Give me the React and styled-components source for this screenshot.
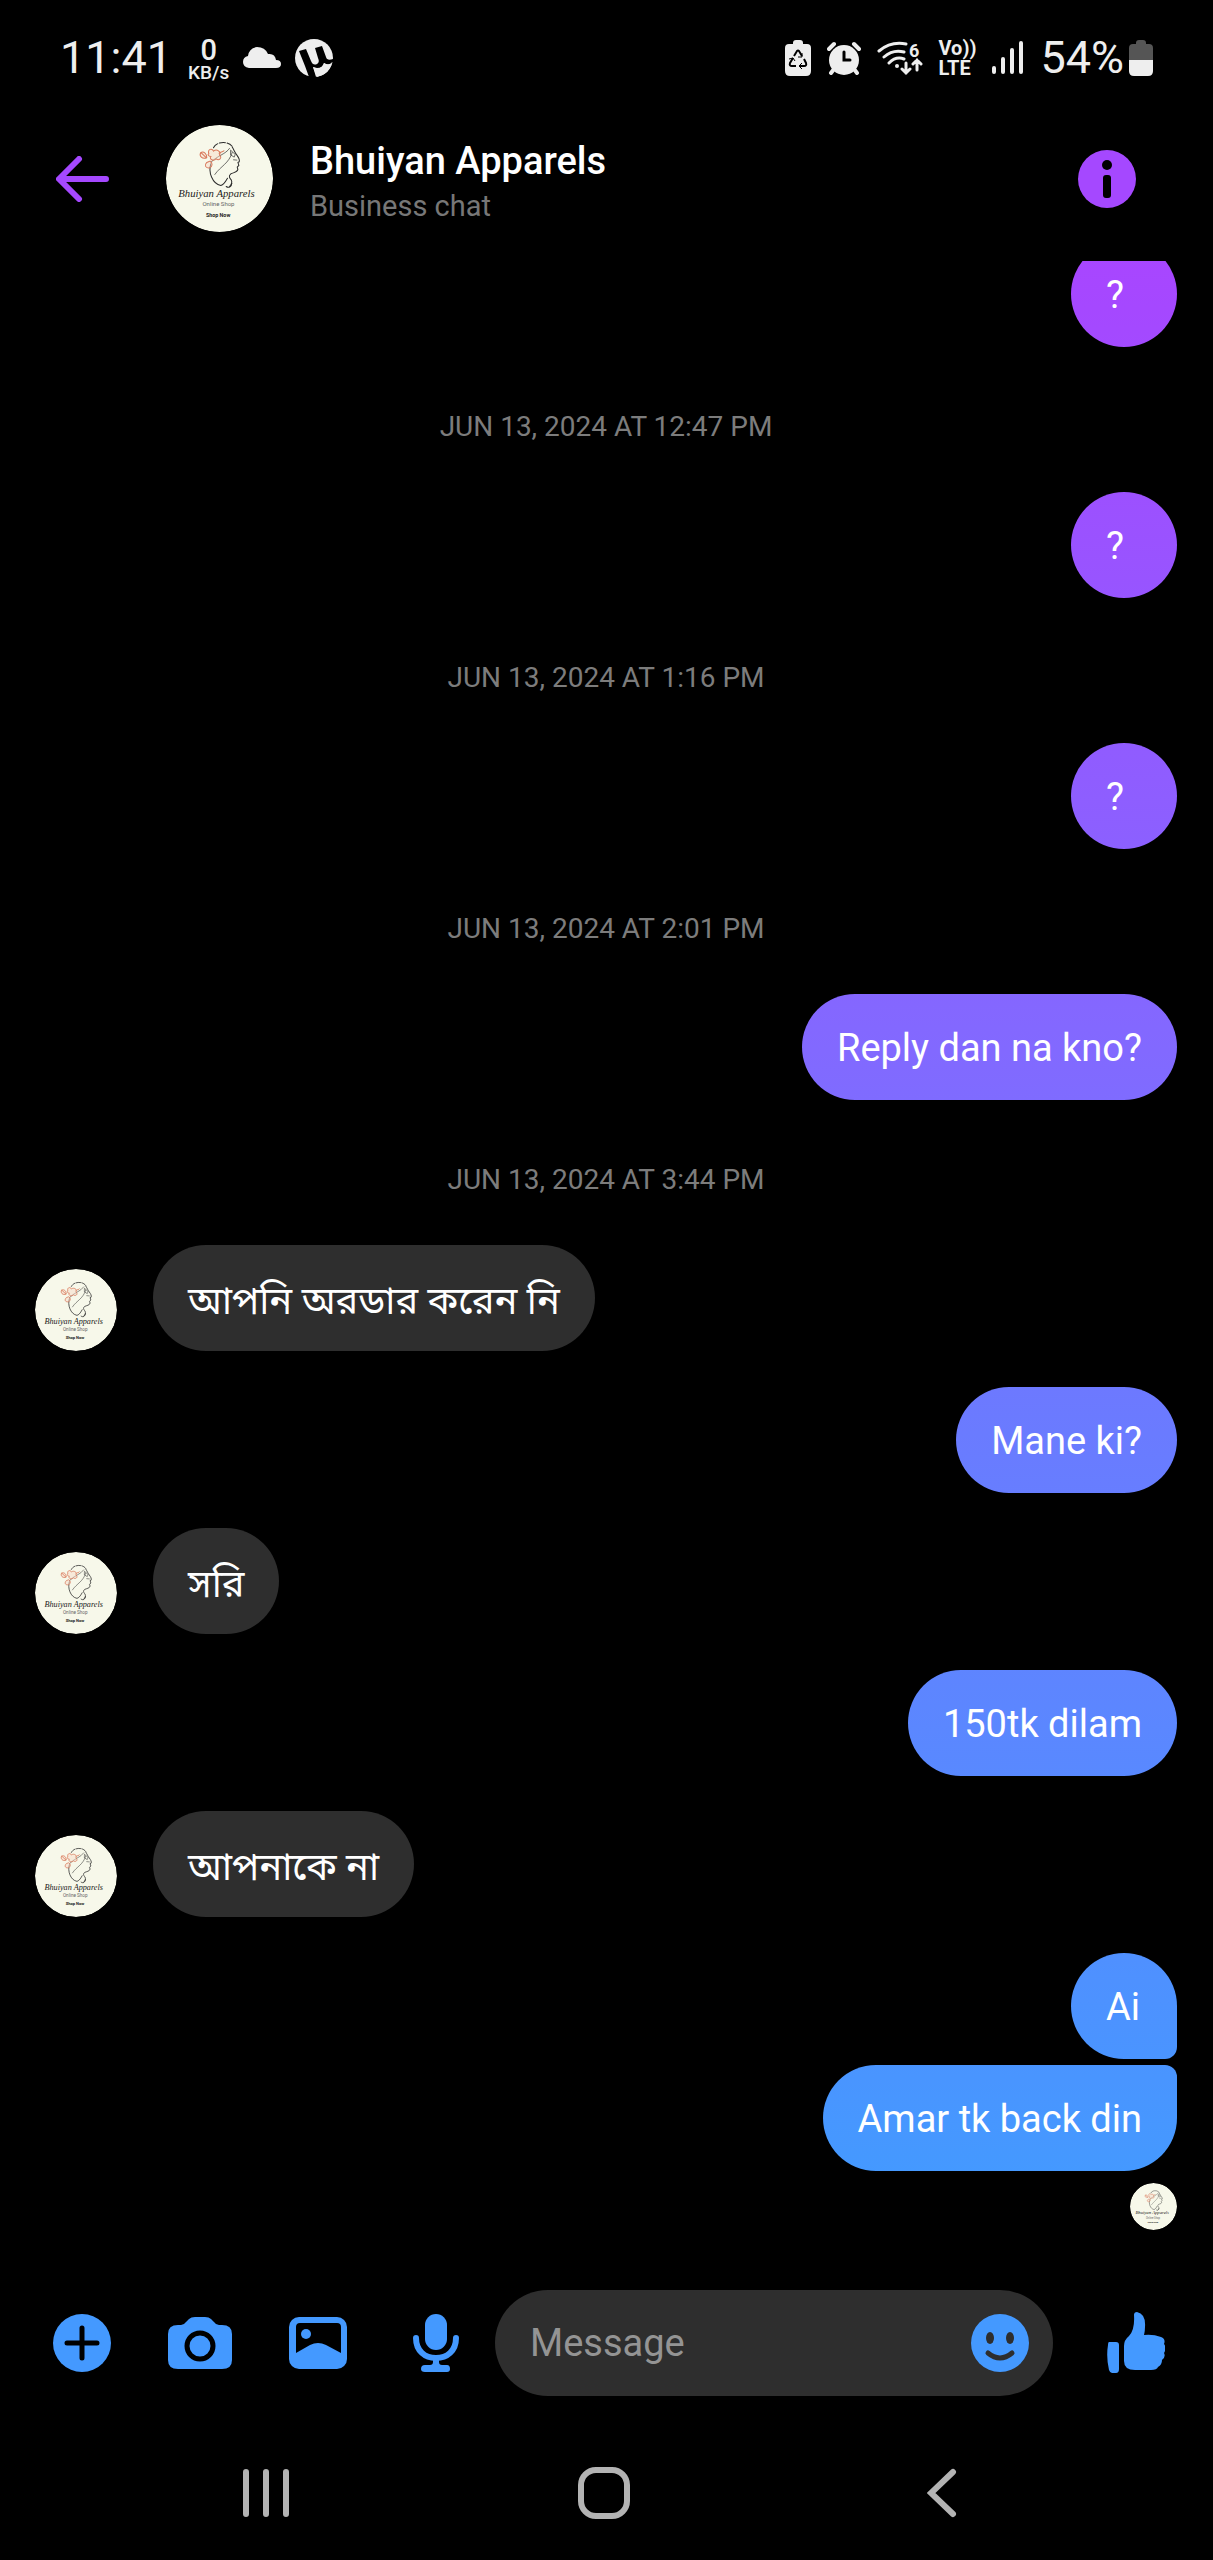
import React from "react";
import styled, { createGlobalStyle } from "styled-components";

const messages = [
  { id: 1, text: "?", mine: true },
  { id: 2, date: "JUN 13, 2024 AT 12:47 PM" },
  { id: 3, text: "?", mine: true },
  { id: 4, date: "JUN 13, 2024 AT 1:16 PM" },
  { id: 5, text: "?", mine: true },
  { id: 6, date: "JUN 13, 2024 AT 2:01 PM" },
  { id: 7, text: "Reply dan na kno?", mine: true },
  { id: 8, date: "JUN 13, 2024 AT 3:44 PM" },
  { id: 9, text: "আপনি অরডার করেন নি" },
  { id: 10, text: "Mane ki?", mine: true, space: "36px" },
  { id: 11, text: "সরি", space: "35px" },
  { id: 12, text: "150tk dilam", mine: true, space: "36px" },
  { id: 13, text: "আপনাকে না", space: "35px" },
  { id: 14, text: "Ai", mine: true, space: "36px", group: "first" },
  { id: 15, text: "Amar tk back din", mine: true, space: "6px", group: "last" }
];

const ShopLogo = () => (
  <svg viewBox="0 0 320 320" width="100%" height="100%" role="img" aria-label="Bhuiyan Apparels logo">
    <circle cx="160" cy="160" r="160" fill="#f7f8ea" />
    <g fill="none" stroke="#2b2b2b" strokeWidth="3" strokeLinecap="round" strokeLinejoin="round">
      <path d="M142 68C150 50 184 46 198 64" strokeDasharray="18 5" />
      <path d="M198 66C204 76 207 84 212 90C218 98 221 104 219 110L215 112L218 121L213 126L215 133C213 142 202 142 194 146C186 152 190 158 195 164C199 172 196 178 190 184" />
      <path d="M134 116C126 140 138 176 164 181C174 178 180 166 184 159" />
      <path d="M134 112C152 92 178 88 190 70M146 148C164 122 188 116 198 82" strokeWidth="2" />
      <path d="M194 76L207 88L204 96L194 90ZM202 104L212 105" strokeWidth="2" />
      <path d="M180 184C188 190 196 184 197 174" />
    </g>
    <g fill="#f7d9c8" fillOpacity="0.5" stroke="#d9795c" strokeWidth="3">
      <path d="M104 82C98 92 108 104 122 98C122 86 114 78 104 82ZM104 82L121 98" />
      <path d="M128 86C124 72 138 68 142 78C152 70 166 80 160 90C170 98 158 108 150 101C142 110 128 102 134 94C126 94 124 88 128 86Z" />
      <path d="M122 112C114 120 118 130 130 128C140 124 140 114 132 108Z" />
      <path d="M158 86C164 78 172 82 174 76" />
    </g>
    <LogoScript x="151" y="214" textAnchor="middle">Bhuiyan Apparels</LogoScript>
    <LogoCaption x="157" y="243" textAnchor="middle">Online Shop</LogoCaption>
    <LogoCaption x="156" y="275" textAnchor="middle" $bold>Shop Now</LogoCaption>
  </svg>
);

const StatusIcons = () => (
  <>
    <svg width="26" height="36" viewBox="0 0 26 36" fill="#eee">
      <path d="M8 3Q8 0 11 0H15Q18 0 18 3V4H22Q26 4 26 8V31Q26 36 21 36H5Q0 36 0 31V8Q0 4 4 4H8Z" />
      <g fill="none" stroke="#000" strokeWidth="2">
        <path d="M9 16L12 11Q13 10 14 11L17 16M19 19L21 23Q22 26 19 26H15M11 26H7Q4 26 5 23L8 18" />
        <path d="M17 13V17H13M17 23L14 26L17 29M4 19L8 18L10 21" strokeWidth="1" />
      </g>
    </svg>
    <svg width="34" height="34" viewBox="0 0 34 34" fill="none" strokeLinecap="round">
      <circle cx="17" cy="19" r="15" fill="#eee" />
      <path d="M2 8L7 3M32 8L27 3" stroke="#eee" strokeWidth="4" />
      <path d="M7 28L4 32M27 28L30 32" stroke="#eee" strokeWidth="4" />
      <path d="M17 11V19H23" stroke="#000" strokeWidth="3" />
    </svg>
    <svg width="46" height="36" viewBox="0 0 46 36" fill="none" stroke="#eee" strokeWidth="3" strokeLinecap="round">
      <path d="M2 11Q14 1 29 4M7 17Q16 9 27 12M12 23Q19 16 27 19" />
      <circle cx="20" cy="26" r="2" fill="#eee" stroke="none" />
      <path d="M29 23V33M25 29L29 33L33 29M40 30V20M36 24L40 20L44 24" />
      <SvgDigit x="32" y="17" stroke="none">6</SvgDigit>
    </svg>
  </>
);

const IconSignal = () => (
  <svg width="32" height="36" viewBox="0 0 32 36" stroke="#eee" strokeWidth="4" strokeLinecap="round">
    <path d="M2 28V32M11 19V32M20 10V32M29 3V32" />
  </svg>
);

const IconBattery = () => (
  <svg width="24" height="36" viewBox="0 0 24 36">
    <path d="M7 3Q7 0 10 0H14Q17 0 17 3V4H20Q24 4 24 8V20H0V8Q0 4 4 4H7Z" fill="#555" />
    <path d="M0 20H24V31Q24 36 19 36H5Q0 36 0 31Z" fill="#eee" />
  </svg>
);

const IconCloud = () => (
  <svg width="38" height="21" viewBox="0 0 38 21">
    <path d="M6 21Q0 20 0 15Q0 10 5 9Q6 1 14 0Q22 0 25 7Q32 6 33 13Q38 13 38 17Q38 21 33 21Z" fill="#eee" />
  </svg>
);

const IconTorrent = () => (
  <svg width="38" height="38" viewBox="0 0 38 38">
    <circle cx="19" cy="19" r="19" fill="#eee" />
    <path d="M4 12L11 10L16 22Q18 27 22 25Q25 23 23 19L20 9L27 7L31 18Q32 22 38 20V23Q34 27 29 24Q28 29 22 29L18 28L21 38L14 38L10 27Z" fill="#000" />
    <path d="M18 28Q26 32 29 24Q34 28 37 23Q35 35 22 38Z" fill="#eee" />
  </svg>
);

const IconBack = () => (
  <svg width="53" height="46" viewBox="0 0 53 46" fill="none" stroke="#a548ff" strokeWidth="6" strokeLinecap="round" strokeLinejoin="round">
    <path d="M23 3L3 23L23 43M4 23H50" />
  </svg>
);

const IconInfo = () => (
  <svg width="58" height="58" viewBox="0 0 58 58">
    <circle cx="29" cy="29" r="29" fill="#a548ff" />
    <circle cx="29" cy="15" r="5" />
    <rect x="25" y="25" width="8" height="23" rx="3" />
  </svg>
);

const IconPlus = () => (
  <svg width="58" height="58" viewBox="0 0 58 58">
    <circle cx="29" cy="29" r="29" fill="#4499ff" />
    <path d="M29 14V44M14 29H44" stroke="#000" strokeWidth="5" strokeLinecap="round" />
  </svg>
);

const IconCamera = () => (
  <svg width="64" height="54" viewBox="0 0 64 54">
    <path d="M0 18Q0 9 10 9H13Q16 9 18 6L21 3Q23 1 27 1H37Q41 1 43 3L46 6Q48 9 51 9H54Q64 9 64 18V44Q64 53 54 53H10Q0 53 0 44Z" fill="#4499ff" />
    <circle cx="32" cy="30" r="13" fill="#4499ff" stroke="#000" strokeWidth="5" />
  </svg>
);

const IconPhoto = () => (
  <svg width="58" height="54" viewBox="0 0 58 54">
    <rect y="1" width="58" height="52" rx="10" fill="#4499ff" />
    <path d="M7 37V11Q7 7 11 7H48Q52 7 52 11V37L37 29Q29 25 21 29Z" />
    <circle cx="17" cy="18" r="5" fill="#4499ff" />
  </svg>
);

const IconMic = () => (
  <svg width="46" height="58" viewBox="0 0 46 58" fill="#4499ff">
    <rect x="12" width="22" height="36" rx="11" />
    <path d="M3 24C3 37 12 44 23 44C34 44 43 37 43 24" fill="none" stroke="#4499ff" strokeWidth="6" strokeLinecap="round" />
    <path d="M20 45H26V48Q26 51 29 51H34Q37 51 37 55Q37 58 34 58H12Q8 58 8 55Q8 51 12 51H17Q20 51 20 48Z" />
  </svg>
);

const IconSmile = () => (
  <svg width="58" height="58" viewBox="0 0 58 58">
    <circle cx="29" cy="29" r="29" fill="#4499ff" />
    <ellipse cx="19" cy="24" rx="4" ry="6" fill="#2e2e2e" />
    <ellipse cx="39" cy="24" rx="4" ry="6" fill="#2e2e2e" />
    <path d="M17 39Q29 49 41 39" fill="none" stroke="#2e2e2e" strokeWidth="5" strokeLinecap="round" />
  </svg>
);

const IconLike = () => (
  <svg width="58" height="62" viewBox="0 0 58 62" fill="#4499ff">
    <path d="M2 30H9Q12 30 12 33V57Q12 61 9 61H5Q3 61 2 58Q-1 45 1 33Q1 30 2 30Z" />
    <path d="M27 3Q27 0 30 0Q39 2 38 15Q38 19 37 23Q46 22 54 25Q59 27 57 32Q60 36 57 41Q59 45 55 48Q55 53 51 55Q50 58 44 58H28Q17 58 17 49V34Q17 28 22 24Q28 18 27 3Z" />
  </svg>
);

const App = () => {
  return (
    <Screen>
      <GlobalStyle />
      <StatusBar>
        <StatusGroup $gap="14px">
          <StatusText>11:41</StatusText>
          <NetSpeed>
            <span>0</span>
            <small>KB/s</small>
          </NetSpeed>
          <IconCloud />
          <IconTorrent />
        </StatusGroup>
        <StatusGroup $gap="16px">
          <StatusIcons />
          <Volte>
            <span>Vo))</span>
            <span>LTE</span>
          </Volte>
          <IconSignal />
          <BatteryInfo>
            <StatusText>54%</StatusText>
            <IconBattery />
          </BatteryInfo>
        </StatusGroup>
      </StatusBar>

      <Header>
        <IconButton aria-label="Back">
          <IconBack />
        </IconButton>
        <Avatar $size="107px" $space="57px">
          <ShopLogo />
        </Avatar>
        <Contact>
          <ContactName>Bhuiyan Apparels</ContactName>
          <ContactNote>Business chat</ContactNote>
        </Contact>
        <IconButton aria-label="Conversation info">
          <IconInfo />
        </IconButton>
      </Header>

      <Thread>
        {messages.map((item) =>
          item.date ? (
            <DateLabel key={item.id}>{item.date}</DateLabel>
          ) : (
            <MessageRow key={item.id} $mine={item.mine} $space={item.space}>
              {!item.mine && (
                <Avatar $size="82px">
                  <ShopLogo />
                </Avatar>
              )}
              <Bubble $mine={item.mine} $group={item.group}>
                {item.text}
              </Bubble>
            </MessageRow>
          )
        )}
        <SeenRow>
          <Avatar $size="47px">
            <ShopLogo />
          </Avatar>
        </SeenRow>
      </Thread>

      <Composer>
        <ActionButton aria-label="More">
          <IconPlus />
        </ActionButton>
        <ActionButton aria-label="Camera">
          <IconCamera />
        </ActionButton>
        <ActionButton aria-label="Gallery">
          <IconPhoto />
        </ActionButton>
        <ActionButton aria-label="Voice message">
          <IconMic />
        </ActionButton>
        <InputPill>
          <MessageInput type="text" placeholder="Message" aria-label="Message" />
          <IconButton aria-label="Emoji">
            <IconSmile />
          </IconButton>
        </InputPill>
        <ActionButton aria-label="Like">
          <IconLike />
        </ActionButton>
      </Composer>

      <SystemNav>
        <NavButton aria-label="Recent apps">
          <svg width="46" height="50" viewBox="0 0 46 50" stroke="#b3b3b3" strokeWidth="6" strokeLinecap="round">
            <path d="M3 4V46M23 4V46M43 4V46" />
          </svg>
        </NavButton>
        <NavButton aria-label="Home">
          <svg width="52" height="52" viewBox="0 0 52 52" fill="none" stroke="#b3b3b3" strokeWidth="6">
            <rect x="3" y="3" width="46" height="46" rx="15" />
          </svg>
        </NavButton>
        <NavButton aria-label="Back to previous app">
          <svg width="30" height="50" viewBox="0 0 30 50" fill="none" stroke="#b3b3b3" strokeWidth="6" strokeLinecap="round">
            <path d="M26 4L4 25L26 46" />
          </svg>
        </NavButton>
      </SystemNav>
    </Screen>
  );
};

const GlobalStyle = createGlobalStyle`
  * {
    box-sizing: border-box;
  }
  body {
    margin: 0;
    background: #000;
    font-family: Roboto, "Noto Sans Bengali", "Noto Sans", sans-serif;
  }
  svg {
    display: block;
    flex-shrink: 0;
  }
`;

const Screen = styled.div`
  display: flex;
  flex-direction: column;
  height: 100vh;
  background: #000;
  color: #fff;
`;

const StatusBar = styled.div`
  display: flex;
  justify-content: space-between;
  align-items: center;
  height: 96px;
  padding: 19px 60px 0;
  flex-shrink: 0;
  color: #eee;
`;

const StatusGroup = styled.div`
  display: flex;
  align-items: center;
  gap: ${(props) => props.$gap};
`;

const StatusText = styled.span`
  font-size: 45px;
  line-height: 48px;
`;

const NetSpeed = styled.div`
  display: flex;
  flex-direction: column;
  align-items: center;
  padding: 4px 0 0 2px;
  font-weight: 500;

  span {
    font-size: 29px;
    line-height: 26px;
  }
  small {
    font-size: 19px;
    line-height: 20px;
  }
`;

const Volte = styled.div`
  display: flex;
  flex-direction: column;
  font-size: 20px;
  line-height: 20px;
  font-weight: 700;
`;

const BatteryInfo = styled.div`
  display: flex;
  align-items: center;
  gap: 5px;
`;

const Header = styled.header`
  display: flex;
  align-items: center;
  height: 165px;
  padding: 0 77px 0 56px;
  flex-shrink: 0;
`;

const IconButton = styled.button`
  padding: 0;
  border: none;
  background: transparent;
  cursor: pointer;
`;

const Avatar = styled.div`
  width: ${(props) => props.$size};
  height: ${(props) => props.$size};
  margin-left: ${(props) => props.$space || 0};
  border-radius: 50%;
  overflow: hidden;
  flex-shrink: 0;
`;

const LogoScript = styled.text`
  font: italic 32px "Liberation Serif", cursive;
  fill: #1c1c1c;
`;

const LogoCaption = styled.text`
  font-family: Roboto, sans-serif;
  font-size: ${(props) => (props.$bold ? "16px" : "18px")};
  font-weight: ${(props) => (props.$bold ? 700 : 400)};
  fill: ${(props) => (props.$bold ? "#1c1c1c" : "#666")};
`;

const SvgDigit = styled.text`
  font-family: Roboto, sans-serif;
  font-size: 18px;
  font-weight: 700;
  fill: #eee;
`;

const Contact = styled.div`
  flex: 1;
  margin-left: 37px;
`;

const ContactName = styled.h1`
  margin: 0;
  font-size: 38px;
  line-height: 54px;
  font-weight: 500;
`;

const ContactNote = styled.p`
  margin: 0;
  color: #777;
  font-size: 29px;
  line-height: 36px;
`;

const Thread = styled.main`
  display: flex;
  flex: 1;
  flex-direction: column;
  justify-content: flex-end;
  min-height: 0;
  padding: 0 36px 30px 35px;
  overflow: hidden;
`;

const DateLabel = styled.time`
  padding: 63px 0 48px;
  color: #7c7c7c;
  font-size: 28px;
  line-height: 34px;
  text-align: center;
`;

const MessageRow = styled.div`
  display: flex;
  flex-shrink: 0;
  align-items: flex-end;
  justify-content: ${(props) => (props.$mine ? "flex-end" : "flex-start")};
  gap: 36px;
  margin-top: ${(props) => props.$space || 0};
`;

const radii = {
  first: "53px 53px 12px 53px",
  last: "53px 12px 53px 53px"
};

/* the fixed attachment lets every sent bubble share one gradient */
const Bubble = styled.div`
  min-width: 106px;
  padding: ${(props) => (props.$mine ? "30px 35px 28px" : "32px 35px 26px")};
  border-radius: ${(props) => radii[props.$group] || "53px"};
  background: ${(props) =>
    props.$mine
      ? "linear-gradient(#a846ff 10%, #a548ff 12%, #8269ff 41%, #6a7bff 56%, #4499ff 85%) fixed"
      : "#2e2e2e"};
  font-size: 38px;
  line-height: 48px;
`;

const SeenRow = styled.div`
  display: flex;
  justify-content: flex-end;
  margin-top: 12px;
`;

const Composer = styled.div`
  display: flex;
  align-items: center;
  height: 165px;
  padding: 0 18px 0 23px;
  flex-shrink: 0;
`;

const ActionButton = styled(IconButton)`
  display: flex;
  align-items: center;
  justify-content: center;
  width: 118px;
  height: 106px;
  flex-shrink: 0;
`;

const InputPill = styled.div`
  display: flex;
  flex: 1;
  align-items: center;
  height: 106px;
  min-width: 0;
  margin-right: 24px;
  padding: 0 24px 0 35px;
  border-radius: 53px;
  background: #2e2e2e;
`;

const MessageInput = styled.input`
  flex: 1;
  min-width: 0;
  padding: 0;
  border: none;
  outline: none;
  background: transparent;
  color: #fff;
  font-family: inherit;
  font-size: 38px;
  line-height: 48px;

  &::placeholder {
    color: #949494;
    opacity: 1;
  }
`;

const SystemNav = styled.nav`
  display: flex;
  justify-content: center;
  height: 135px;
  padding-right: 5px;
  flex-shrink: 0;
`;

const NavButton = styled(IconButton)`
  display: flex;
  flex-basis: 28%;
  align-items: center;
  justify-content: center;
`;

export default App;
